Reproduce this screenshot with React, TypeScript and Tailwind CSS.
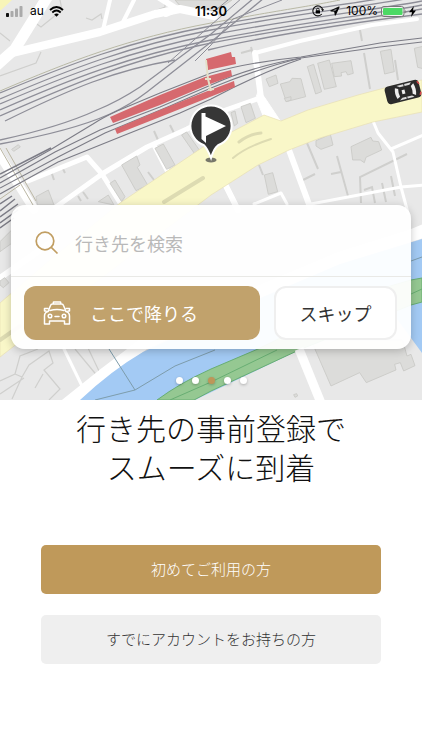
import React from "react";

const sans = "font-['Inter','Noto_Sans_CJK_JP',sans-serif]";
const jp = "font-['Noto_Sans_CJK_JP',sans-serif]";

function CityMap() {
  return (
    <svg
      className="absolute inset-0 h-full w-full"
      viewBox="0 0 422 400"
      preserveAspectRatio="xMidYMid slice"
      aria-hidden="true"
    >
      <rect width="422" height="400" fill="#e8e8e8" />
      <path d="M0 0H12L0 11Z" fill="#f8f5b8" />
      <path d="M175 0L182 8Q200 14 217 10L232 0Z" fill="#dcdcda" stroke="#c9c9c3" />

      {/* property outlines */}
      <g fill="none" stroke="#cfcfcd" strokeWidth="1.2">
        <path d="M34 22L41 27L62 10L60 0M86 18L92 20L101 14L102 19M0 33L10 41M0 76L36 63L41 52M130 20L165 7V0" />
        <path d="M241 53L252 50M251 47L253 54M360 30L362 41M364 53L370 89M395 60L398 80" strokeWidth="2" />
        <path d="M154 131L158 140M170 125L174 133M51 171L54 180M62 167L65 173M78 196L81 201M83 192L88 199M148 172L154 180" strokeWidth="2" />
        <path d="M307 143L318 169M303 180L315 174M337 156L348 196M331 174L341 172M259 165L263 175M361 203L360 177L407 154M364 190L372 187L375 203M382 183L386 202M391 176L395 196" strokeWidth="2" />
        <path d="M0 381L15 374L20 356L38 349M15 374L22 377L12 399M22 377L29 365L49 351L53 363L44 370L60 389L49 400M35 388L43 374M0 394L24 378M88 348L99 371M75 349L99 378" />
      </g>

      {/* minor roads */}
      <g fill="none" stroke="#fff" strokeLinecap="round" strokeLinejoin="round">
        <path d="M48 -4L15 49L-4 66" strokeWidth="11" />
        <path d="M12 53L100 32L155 14L180 9L214 16" strokeWidth="8" />
        <path d="M158 -3L177 9L166 14" strokeWidth="6" />
        <path d="M110 0L103 30M134 0L122 24" strokeWidth="4" />
        <path d="M417 19L372 25L300 41L255 53" strokeWidth="4" />
        <path d="M255 53L261 98L273 121" strokeWidth="6" />
        <path d="M259 90L265 98L281 122L264 118L256 98Z" strokeWidth="1" fill="#fff" />
        <path d="M260 98L220 112L187 129L147 147L102 174L56 207M28 181L87 157L102 174L122 206M155 147L169 174" strokeWidth="5" />
        <path d="M-3 151L34 209" strokeWidth="9" />
        <path d="M289 150L310 207M225 184L238 210" strokeWidth="6" />
        <path d="M373 121L378 133L393 152L401 187L408 213M311 204L401 187L426 185M391 149L426 134M254 204L281 193L287 204" strokeWidth="3" />
        <path d="M-3 280L56 239" strokeWidth="6" />
        <path d="M64 349L82 386" strokeWidth="3" />
        <path d="M402 236L426 226" strokeWidth="6" />
      </g>
      <path d="M0 148L33 205M6 148L36 201M0 199L20 185" stroke="#bbb7a4" fill="none" />

      {/* buildings */}
      <g fill="#dcdcda" stroke="#cacac6" strokeWidth="2.600">
        <g transform="translate(211 0) scale(.3333)">
          <path d="M165 237L195 225L201 250L175 260ZM208 252L237 245L243 235L270 236L284 290L226 305ZM289 200L308 193L332 275L314 282ZM320 190L355 180L376 260L340 268ZM362 190L420 182L427 220L410 225L405 215L390 218L392 228L370 230ZM508 154L540 148L550 215L521 222ZM610 145L640 138V207L620 202Z" />
        </g>
        <g transform="translate(0 100) scale(.3333)">
          <path d="M365 195L410 168L420 195L412 202L443 255L408 272ZM465 145L490 132L525 195L500 208ZM545 105L560 96L598 150L583 160ZM330 250L345 240L375 290L365 305ZM108 290L145 270L162 315H112ZM295 305L325 285L342 315ZM35 148L55 134L61 141L41 154Z" />
        </g>
        <g transform="translate(211 100) scale(.3333)">
          <path d="M90 20L118 10L133 55L105 68ZM60 38L72 33L80 70L70 78ZM220 -5L240 -10V0L225 5ZM315 122L358 103L366 135L330 148L315 138ZM420 140L480 112L485 123L503 125L512 150L465 172L460 188L448 180L425 180ZM160 225L185 218L200 275L172 283Z" />
        </g>
        <g transform="translate(211 200) scale(.3333)">
          <path d="M300 420L360 558L446 518L466 548L555 510L551 493L568 488L578 513L612 497L600 463L588 468L575 420ZM248 584L257 581L260 588L252 592Z" />
        </g>
        <g transform="translate(0 200) scale(.3333)">
          <path d="M0 243L14 233L27 248L10 263L0 255ZM0 125L35 90V130L0 155Z" />
        </g>
      </g>

      {/* avenue */}
      <path
        d="M0 303L50 260L120 203L203 147L264 115L281 121L308 110L358 95L392 86L422 80V112L373 122L320 138L289 150L258 165L211 195L100 279L0 357Z"
        fill="#f9f7c8"
        stroke="#e8dfb4"
        strokeWidth=".7"
      />
      <g fill="none" stroke="#dddbb2" strokeWidth="4" strokeLinecap="round">
        <path d="M164 202L203 178M0 340L20 326" />
        <path d="M239 142Q249 134 261 133" strokeWidth="3" />
        <path d="M233 158Q246 147 271 139" strokeWidth="2" />
      </g>

      {/* river and its green strip */}
      <path d="M64 406L104 374L145 343L230 304L340 258L426 231" fill="none" stroke="#fff" strokeWidth="12" />
      <path d="M80 400Q112 370 143 352L230 311L340 264L422 239V353L411 338L390 310L299 350L195 400Z" fill="#a3caf4" />
      <path d="M157 400Q180 383 211 369L258 349L380 289L411 280L422 278V302L411 305L299 350L211 391L194 400Z" fill="#95c892" stroke="#68ae73" />
      <path d="M170 400L211 382L277 350M411 294L422 289" stroke="#68ae73" fill="none" />
      <path d="M109 349L135 390M95 400L135 390L175 366L215 350M411 261L422 257" stroke="#7d9cab" fill="none" />
      <path d="M299 349L321 403" stroke="#fff" strokeWidth="9" />

      {/* railway */}
      <g fill="none" stroke="#8e8e98" strokeWidth="1.3">
        <path d="M0 91C70 61 130 38 211 23S300 8 340 0" stroke="#b9b9a6" strokeWidth="1" />
        <path d="M0 93C70 64 130 41 211 26S350 4 390 -3" />
        <path d="M0 99C70 69 130 46 211 30S370 6 422 -4" />
        <path d="M0 104C70 74 130 51 211 35S370 11 422 1" />
        <path d="M0 110C70 79 130 56 211 40S370 15 422 5" />
        <path d="M0 116C70 85 125 62 197 46S370 19 422 9" />
        <path d="M5 121C70 89 115 70 175 60M208 50C260 37 350 23 422 14" />
        <path d="M254 -2L211 34L140 87Q119 101 97 110Q60 127 0 140" />
        <path d="M264 -2L211 42L147 92Q130 105 110 114Q72 131 0 144" />
        <path d="M242 -2L211 25L168 63M228 0L211 14M282 0L233 19L211 45L195 61" strokeWidth="1" />
      </g>
      <g fill="none" stroke="#7c7c86" strokeWidth="1.1">
        <path d="M0 178L50 150L93 124Q102 118 117 111L160 93L211 73Q250 62 301 57L380 43L422 38" />
        <path d="M0 183L55 152L100 130L160 107L211 85Q250 67 301 58L380 47L422 42" />
        <path d="M0 188L60 156L105 133L170 106L211 88Q260 68 301 58" />
        <path d="M0 194L58 162L120 137L180 113L211 99Q260 73 301 59" />
        <path d="M0 174L51 148" strokeWidth="1.5" />
        <path d="M0 204L12 196M0 211L15 199M0 217L18 204M0 223L18 210M0 228L14 218" strokeWidth="1.5" />
      </g>

      {/* platforms */}
      <g fill="#d6696e">
        <path d="M110 117L160 95L205 77L231 70L232 76L205 86L160 105L113 123Z" />
        <path d="M115 129L160 110L205 92L234 81L235 87L205 99L160 117L117 134Z" />
        <path d="M206 59L231 52L232 57L235 57L236 64L208 70Z" />
      </g>
      <path d="M206 60L208 79L211 91M205 79H211M208 90L214 89" stroke="#e4e0c9" strokeWidth="2" fill="none" />

      {/* taxi */}
      <g transform="translate(403 92) rotate(-14)">
        <rect x="-17.5" y="-9" width="35" height="18" rx="4" fill="#2b2b2b" />
        <path d="M16 -7L17.500 -4M17.500 4L16 7" stroke="#d8464c" strokeWidth="1.5" />
        <path d="M-7 -5.500Q-9 0 -7 5.500L-4 4Q-5 0 -4 -4ZM12 -6Q14 0 12 6L9 4Q10 0 9 -4Z" fill="#eee" />
        <path d="M-5 -7.500H10L8 -5.500H-2ZM-5 7.500H10L8 5.500H-2Z" fill="#ddd" />
        <path d="M2.500 -8V-5M2.500 8V5" stroke="#2b2b2b" />
        <rect x="-1" y="-2" width="3" height="4" fill="#eee" />
      </g>

      {/* map pin */}
      <ellipse cx="211" cy="160" rx="5.500" ry="2.500" fill="#77776a" />
      <path
        d="M211 105.500A20.500 20.500 0 0 0 204 145.300Q207 148 211 158Q214 148 218 145.300A20.500 20.500 0 0 0 211 105.500Z"
        fill="#363636"
        stroke="#fff"
        strokeWidth="2"
      />
      <path d="M201.500 113H205.500V116.500L226 126L206 136V143L201.500 139Z" fill="#fff" />
    </svg>
  );
}

function StatusBar() {
  return (
    <div className={`relative grid h-[22px] grid-cols-3 items-center px-[6px] text-[12px] leading-[22px] text-black ${sans}`}>
      <div className="flex items-center">
        <svg width="18" height="11" viewBox="0 0 18 11" aria-hidden="true">
          <rect x="0" y="7" width="3" height="4" rx=".8" fill="#111" />
          <rect x="4.500" y="5" width="3" height="6" rx=".8" fill="#aaa" />
          <rect x="9" y="2.500" width="3" height="8.500" rx=".8" fill="#aaa" />
          <rect x="13.500" y="0" width="3" height="11" rx=".8" fill="#aaa" />
        </svg>
        <span className="ml-[6px]">au</span>
        <svg className="ml-[5px]" width="15" height="11" viewBox="0 0 15 11" aria-hidden="true">
          <g fill="none" stroke="#000" strokeWidth="1.900">
            <path d="M1 4Q7.500 -2 14 4" />
            <path d="M3.300 6.500Q7.500 2.700 11.700 6.500" />
          </g>
          <path d="M5.200 8.400Q7.500 6.500 9.800 8.400L7.500 10.800Z" />
        </svg>
      </div>
      <span className="text-center text-[13px] font-semibold">11:30</span>
      <div className="flex items-center justify-end">
        <svg width="12" height="12" viewBox="0 0 12 12" aria-hidden="true">
          <path d="M9.800 9A5 5 0 1 1 10.700 4.500" fill="none" stroke="#111" strokeWidth="1.100" />
          <path d="M9 4.200H12L10.800 6.500Z" />
          <rect x="3.700" y="5.300" width="4.300" height="3.200" rx=".5" />
          <path d="M4.600 5.500V4.500a1.250 1.250 0 0 1 2.500 0V5.500" fill="none" stroke="#111" strokeWidth=".9" />
        </svg>
        <svg className="ml-[6px]" width="10" height="10" viewBox="0 0 10 10" aria-hidden="true">
          <path d="M9 1L.9 4.800L4.700 5.200L5.300 9Z" fill="none" stroke="#111" strokeWidth="1.200" strokeLinejoin="round" />
          <path d="M9 1L4.700 5.200L5.300 9Z" />
        </svg>
        <span className="ml-[6px]">100%</span>
        <svg className="ml-[3px]" width="26" height="11" viewBox="0 0 26 11" aria-hidden="true">
          <rect x=".5" y=".5" width="22.500" height="10" rx="2.500" fill="#fff" fillOpacity=".5" stroke="#777" />
          <rect x="2" y="2" width="19.500" height="7" rx="1" fill="#4cd964" />
          <path d="M24.300 3.500Q26 5.500 24.300 7.500Z" fill="#777" />
        </svg>
        <svg className="ml-[2px]" width="7" height="11" viewBox="0 0 7 11" aria-hidden="true">
          <path d="M4.800 0L0 6.300H3L2 11L7 4.500H4Z" />
        </svg>
      </div>
    </div>
  );
}

function TaxiIcon() {
  return (
    <svg width="28" height="24" viewBox="0 0 28 24" fill="none" stroke="#fff" strokeWidth="1.500" strokeLinejoin="round" strokeLinecap="round" aria-hidden="true">
      <path d="M10 3L10.500 1H17.500L18 3M5 10.500L7.500 4.500Q8 3 9.500 3H18.500Q20 3 20.500 4.500L23 10.500M7 9.500Q14 7.500 21 9.500" />
      <path d="M5 10.500Q1.500 11.500 1.500 15V23H6.500V20H21.500V23H26.500V15Q26.500 11.500 23 10.500M5 7.500H1.500V10H3M23 7.500H26.500V10H25" />
      <circle cx="7" cy="15" r="1.800" />
      <circle cx="21" cy="15" r="1.800" />
      <path d="M12 15.500H16" />
    </svg>
  );
}

function DestinationCard() {
  return (
    <section className="relative mx-[11px] mt-[183px] rounded-[14px] bg-white/95 shadow-[0_2px_8px_rgba(0,0,0,0.22)]">
      <div className="flex h-[72px] items-center border-b border-[#e9e9e6] px-6 pt-[5px]">
        <svg width="24" height="24" viewBox="0 0 24 24" fill="none" stroke="#c19e62" strokeWidth="1.700" aria-hidden="true">
          <circle cx="10" cy="10" r="8.800" />
          <path d="M16.300 16.300L22.500 22.500" />
        </svg>
        <input
          type="search"
          aria-label="行き先を検索"
          placeholder="行き先を検索"
          className={`ml-4 min-w-0 flex-1 bg-transparent text-[18px] leading-[27px] outline-none placeholder:text-[#b9b9b9] ${jp}`}
        />
      </div>
      <div className="grid grid-cols-[236fr_123fr] gap-[14px] py-[9px] pr-[14px] pl-[13px]">
        <button type="button" className={`flex h-[54px] items-center rounded-[12px] bg-[#c1a26c] pl-[19px] text-[18px] text-white ${jp}`}>
          <TaxiIcon />
          <span className="ml-[19px]">ここで降りる</span>
        </button>
        <button type="button" className={`h-[54px] rounded-[12px] border-2 border-[#efefef] bg-white text-[18px] text-[#333] ${jp}`}>
          スキップ
        </button>
      </div>
    </section>
  );
}

function PageDots() {
  return (
    <div className="relative mt-[28px] flex justify-center gap-[9px]">
      {[1, 2, 3, 4, 5].map((n) => (
        <button
          key={n}
          type="button"
          aria-label={`${n} / 5`}
          className={`size-[7px] rounded-full shadow-[0_1px_3px_rgba(0,0,0,0.25)] ${n === 3 ? "bg-[#bd9659]" : "bg-white"}`}
        />
      ))}
    </div>
  );
}

export default function App() {
  return (
    <main className="min-h-screen bg-white">
      <header className="relative overflow-hidden pb-4">
        <CityMap />
        <StatusBar />
        <DestinationCard />
        <PageDots />
      </header>
      <h1 className={`mt-2 text-center text-[30px] leading-[39px] font-light text-[#111] ${jp}`}>
        <span className="block">行き先の事前登録で</span>
        <span className="block">スムーズに到着</span>
      </h1>
      <div className={`mt-[59px] flex flex-col gap-[21px] px-[41px] text-[15px] font-light ${jp}`}>
        <button type="button" className="h-[49px] rounded-[5px] bg-[#bf995a] text-white">
          初めてご利用の方
        </button>
        <button type="button" className="h-[49px] rounded-[5px] bg-[#efefef] text-[#333]">
          すでにアカウントをお持ちの方
        </button>
      </div>
    </main>
  );
}
